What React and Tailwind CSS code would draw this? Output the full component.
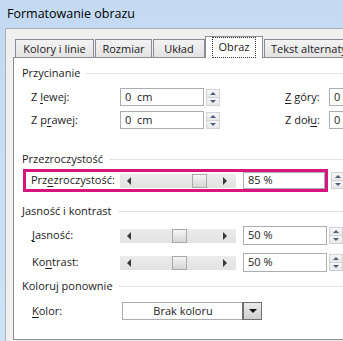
const font = "font-['Open_Sans',sans-serif]";

function U({ children }) {
  return <span className="underline underline-offset-[2px] decoration-[1px]">{children}</span>;
}

function GroupHeader({ title, className }) {
  return (
    <div className={"flex items-center h-[16px] gap-[6px] " + className}>
      <span className="whitespace-nowrap">{title}</span>
      <div className="flex-1 h-px bg-[#dde3e9]" />
    </div>
  );
}

function Spinner({ className }) {
  return (
    <div className={"flex flex-col shrink-0 w-[14px] h-[17px] " + className}>
      <div className="flex-1 flex items-center justify-center border border-[#cfd3d8] bg-gradient-to-b from-[#f7f7f7] to-[#e8e8e8]">
        <div className="w-0 h-0 border-x-[3px] border-x-transparent border-b-[3px] border-b-[#4f5f7a]" />
      </div>
      <div className="flex-1 flex items-center justify-center border border-t-0 border-[#cfd3d8] bg-gradient-to-b from-[#f7f7f7] to-[#e8e8e8]">
        <div className="w-0 h-0 border-x-[3px] border-x-transparent border-t-[3px] border-t-[#4f5f7a]" />
      </div>
    </div>
  );
}

function Slider({ thumbClass }) {
  return (
    <div className="flex items-center shrink-0 w-[116px] h-[14px] bg-gradient-to-b from-[#ececec] to-[#e2e2e2]">
      <div className="ml-[7px] w-0 h-0 border-y-[4px] border-y-transparent border-r-[4px] border-r-[#3a3a3a]" />
      <div className={"w-[15px] h-[14px] border border-[#a9a9a9] bg-gradient-to-b from-[#f5f5f5] to-[#d6d6d6] " + thumbClass} />
      <div className="ml-auto mr-[9px] w-0 h-0 border-y-[4px] border-y-transparent border-l-[4px] border-l-[#3a3a3a]" />
    </div>
  );
}

function Tab({ label, className }) {
  return (
    <div className={"h-[18px] pt-[2px] shrink-0 flex items-center justify-center border border-b-0 border-[#898c95] bg-gradient-to-b from-[#f3f3f3] to-[#e3e3e3] whitespace-nowrap " + className}>
      {label}
    </div>
  );
}

export default function App() {
  return (
    <div className={"w-[343px] h-[341px] overflow-hidden flex flex-col bg-gradient-to-b from-[#c4daf2] to-[#cfe1f5] text-[11px] text-[#1b1b1b] " + font}>
      <div className="h-[28px] shrink-0 flex items-center pl-[7px] text-[12.5px] text-black">
        Formatowanie obrazu
      </div>
      <div className="flex-1 ml-[5px] border-l border-t border-[#a7b1bd] bg-[#f0f0f0] pl-[7px] pt-[7px]">
        {/* tab strip */}
        <div className="flex items-end h-[21px] pl-[2px]">
          <Tab label="Kolory i linie" className="w-[79px]" />
          <Tab label="Rozmiar" className="w-[57px] ml-[1px]" />
          <Tab label="Układ" className="w-[52px] ml-[1px]" />
          <div className="relative z-10 shrink-0 w-[58px] h-[22px] -mb-px flex items-center justify-center border border-b-0 border-[#898c95] bg-white">
            <span className="px-[5px] py-[1px] border border-dotted border-[#333]">Obraz</span>
          </div>
          <Tab label="Tekst alternaty" className="w-[90px] ml-[1px] justify-start pl-[6px]" />
        </div>
        {/* panel */}
        <div className="w-[360px] h-[283px] border border-[#898c95] bg-white pl-[8px] pt-[7px]">
          <GroupHeader title="Przycinanie" />
          <div className="flex items-center h-[18px] mt-[7px]">
            <div className="w-[98px] pl-[9px]">
              Z <U>l</U>ewej:
            </div>
            <div className="w-[84px] h-[18px] border border-[#abadb3] flex items-center pl-[4px]">0&nbsp;&nbsp;cm</div>
            <Spinner className="ml-[2px]" />
            <div className="ml-[65px] w-[44px]">
              <U>Z</U> góry:
            </div>
            <div className="w-[40px] h-[18px] border border-[#abadb3] flex items-center pl-[4px]">0</div>
          </div>
          <div className="flex items-center h-[18px] mt-[5px]">
            <div className="w-[98px] pl-[9px]">
              Z p<U>r</U>awej:
            </div>
            <div className="w-[84px] h-[18px] border border-[#abadb3] flex items-center pl-[4px]">0&nbsp;&nbsp;cm</div>
            <Spinner className="ml-[2px]" />
            <div className="ml-[65px] w-[44px]">
              Z doł<U>u</U>:
            </div>
            <div className="w-[40px] h-[18px] border border-[#abadb3] flex items-center pl-[4px]">0</div>
          </div>

          <GroupHeader title="Przezroczystość" className="mt-[22px]" />
          <div className="flex items-center mt-[2px]">
            <div className="ml-[1px] w-[305px] h-[23px] border-[3px] border-[#d6157f] flex items-center">
              <div className="w-[94px] pl-[5px] whitespace-nowrap">
                Prz<U>e</U>zroczystość:
              </div>
              <Slider thumbClass="ml-[61px]" />
              <div className="ml-[7px] flex-1 h-[17px] border border-[#abadb3] flex items-center pl-[4px]">85 %</div>
            </div>
            <Spinner className="ml-[3px]" />
          </div>

          <GroupHeader title="Jasność i kontrast" className="mt-[11px]" />
          <div className="flex items-center h-[19px] mt-[7px]">
            <div className="w-[98px] pl-[10px]">
              <U>J</U>asność:
            </div>
            <Slider thumbClass="ml-[41px]" />
            <div className="ml-[7px] w-[84px] h-[19px] border border-[#abadb3] flex items-center pl-[4px]">50 %</div>
            <Spinner className="ml-[2px]" />
          </div>
          <div className="flex items-center h-[19px] mt-[8px]">
            <div className="w-[98px] pl-[10px]">
              Ko<U>n</U>trast:
            </div>
            <Slider thumbClass="ml-[41px]" />
            <div className="ml-[7px] w-[84px] h-[19px] border border-[#abadb3] flex items-center pl-[4px]">50 %</div>
            <Spinner className="ml-[2px]" />
          </div>

          <GroupHeader title="Koloruj ponownie" className="mt-[6px]" />
          <div className="flex items-center h-[18px] mt-[8px]">
            <div className="w-[100px] pl-[10px]">
              <U>K</U>olor:
            </div>
            <div className="w-[140px] h-[18px] flex border border-[#abadb3]">
              <div className="flex-1 flex items-center justify-center">Brak koloru</div>
              <div className="w-[18px] border-l border-[#707070] outline outline-1 outline-[#707070] bg-gradient-to-b from-[#ececec] to-[#cfcfcf] flex items-center justify-center">
                <div className="w-0 h-0 border-x-[4px] border-x-transparent border-t-[4px] border-t-[#111]" />
              </div>
            </div>
          </div>
        </div>
      </div>
    </div>
  );
}
